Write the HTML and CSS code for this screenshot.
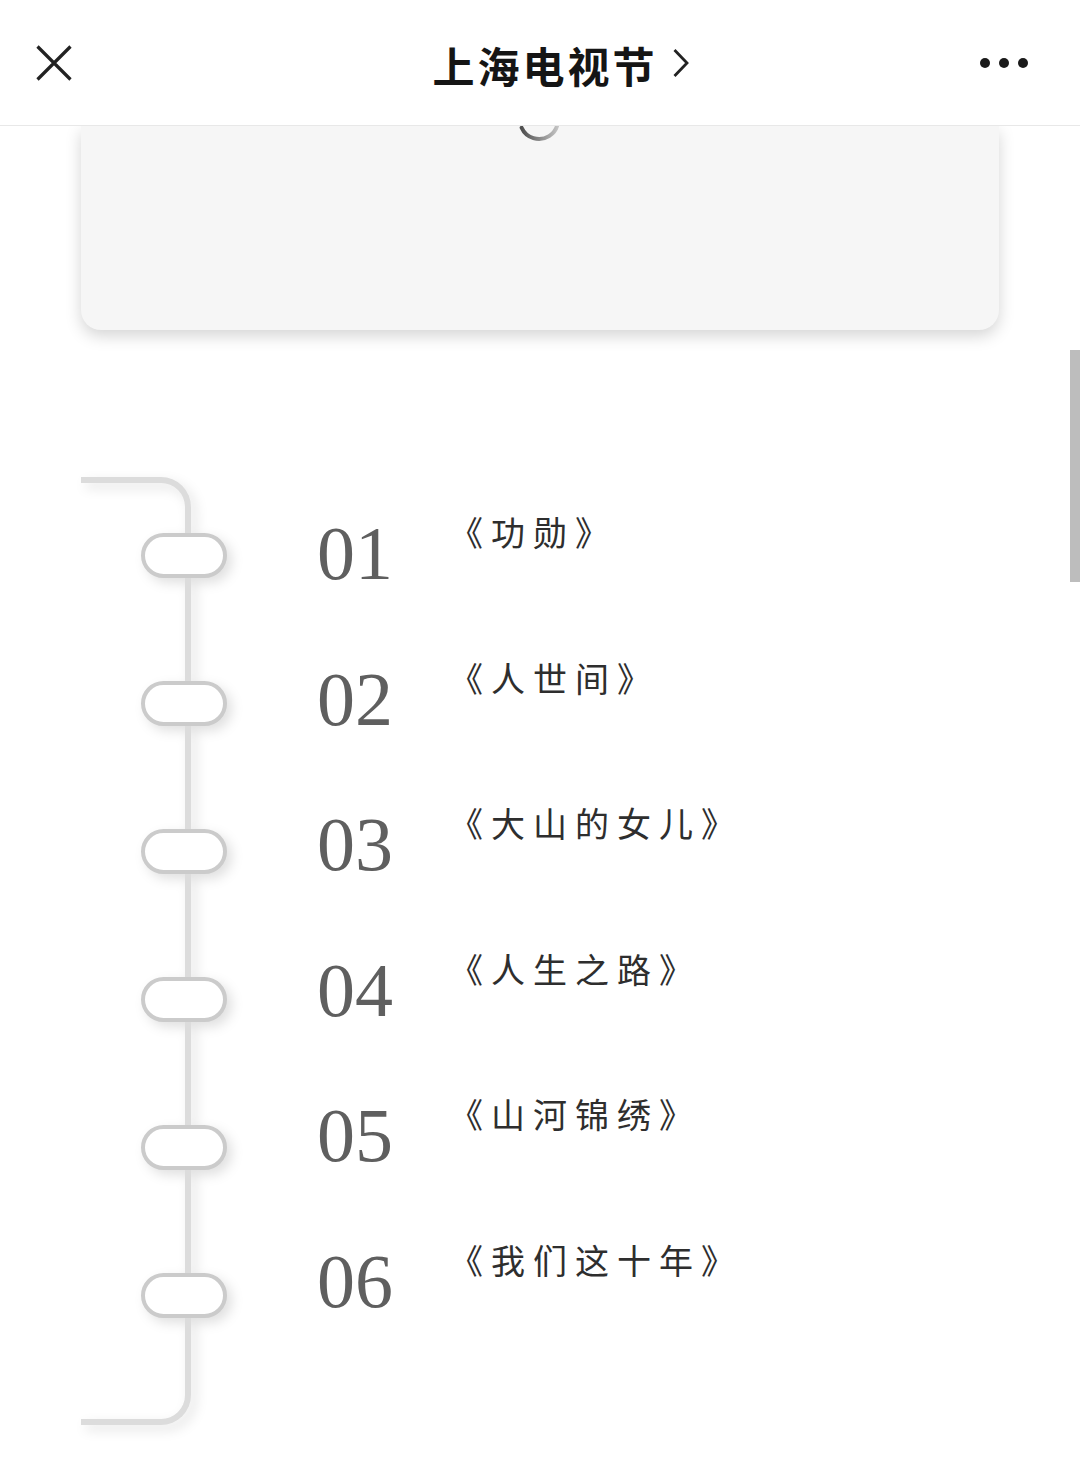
FILE: index.html
```html
<!DOCTYPE html>
<html lang="zh-CN">
<head>
<meta charset="utf-8">
<title>上海电视节</title>
<link rel="stylesheet" href="styles.css">
</head>
<body>
<header class="topbar">
  <div class="topbar-left">
    <svg class="icon-close" viewBox="0 0 36 36" width="36" height="36" aria-hidden="true">
      <path d="M1.5 1.5 L34.5 34.5 M34.5 1.5 L1.5 34.5" stroke="#222" stroke-width="3.2" stroke-linecap="butt" fill="none"/>
    </svg>
  </div>
  <div class="topbar-title">
    <span class="title-text">上海电视节</span>
    <svg class="icon-chevron" viewBox="0 0 18 30" width="18" height="30" aria-hidden="true">
      <path d="M2.5 2 L15 15 L2.5 28" stroke="#222" stroke-width="2.8" fill="none"/>
    </svg>
  </div>
  <div class="topbar-right">
    <span class="dot"></span><span class="dot"></span><span class="dot"></span>
  </div>
</header>

<section class="card">
  <svg class="spinner" viewBox="0 0 44 44" width="44" height="44" aria-hidden="true">
    <defs>
      <linearGradient id="spin-grad" x1="1" y1="0" x2="0" y2="0">
        <stop offset="0" stop-color="#c4c4c4"/>
        <stop offset="1" stop-color="#4f4f4f"/>
      </linearGradient>
    </defs>
    <path d="M36.55 9.79 A19 19 0 1 1 4.64 29.73" stroke="url(#spin-grad)" stroke-width="4" stroke-linecap="round" fill="none"/>
  </svg>
</section>

<section class="timeline">
  <div class="binder">
    <span class="ring"></span>
    <span class="ring"></span>
    <span class="ring"></span>
    <span class="ring"></span>
    <span class="ring"></span>
    <span class="ring"></span>
  </div>
  <ol class="entries">
    <li class="entry"><span class="num">01</span><span class="name">《功勋》</span></li>
    <li class="entry"><span class="num">02</span><span class="name">《人世间》</span></li>
    <li class="entry"><span class="num">03</span><span class="name">《大山的女儿》</span></li>
    <li class="entry"><span class="num">04</span><span class="name">《人生之路》</span></li>
    <li class="entry"><span class="num">05</span><span class="name">《山河锦绣》</span></li>
    <li class="entry"><span class="num">06</span><span class="name">《我们这十年》</span></li>
  </ol>
</section>

<div class="scroll-thumb"></div>
</body>
</html>
```

FILE: styles.css
```css
html, body {
  margin: 0;
  padding: 0;
  background: #ffffff;
}

body {
  width: 1080px;
  height: 1475px;
  overflow: hidden;
  position: relative;
  font-family: "Noto Sans CJK SC", "Noto Sans", sans-serif;
  color: #333;
}

/* ---------- top navigation bar ---------- */
.topbar {
  position: relative;
  z-index: 2;
  height: 125px;
  background: #ffffff;
  border-bottom: 1px solid #e8e8e8;
  display: grid;
  grid-template-columns: 200px 1fr 200px;
  align-items: center;
}

.topbar-left {
  padding-left: 36px;
  display: flex;
  align-items: center;
}

.icon-close {
  display: block;
}

.topbar-title {
  display: flex;
  align-items: center;
  justify-content: center;
  gap: 14px;
  padding-left: 42px;
}

.title-text {
  font-size: 42px;
  font-weight: 700;
  letter-spacing: 3px;
  color: #151515;
  line-height: 1;
  padding-top: 4px;
}

.icon-chevron {
  display: block;
}

.topbar-right {
  display: flex;
  justify-content: flex-end;
  align-items: center;
  gap: 9px;
  padding-right: 52px;
}

.dot {
  width: 10px;
  height: 10px;
  border-radius: 50%;
  background: #1a1a1a;
}

/* ---------- loading card ---------- */
.card {
  position: relative;
  z-index: 1;
  margin: 0 81px;
  height: 204px;
  background: #f6f6f6;
  border-radius: 0 0 20px 20px;
  box-shadow: 0 6px 16px rgba(0, 0, 0, 0.17);
  overflow: hidden;
  display: flex;
  justify-content: center;
}

.spinner {
  display: block;
  margin-top: -28px;
  margin-left: -2px;
}

/* ---------- binder timeline ---------- */
.timeline {
  display: flex;
  margin: 147px 0 0 81px;
}

.binder {
  box-sizing: border-box;
  width: 110px;
  height: 948px;
  border: 6px solid #dcdcdc;
  border-left: none;
  border-radius: 0 30px 30px 0;
  filter: drop-shadow(5px 5px 6px rgba(0, 0, 0, 0.12));
  display: flex;
  flex-direction: column;
  align-items: flex-start;
  gap: 103px;
  padding: 50px 0 0 60px;
}

.ring {
  display: block;
  flex: none;
  box-sizing: border-box;
  width: 86px;
  height: 45px;
  border: 4px solid #cbcbcb;
  border-radius: 23px;
  background: #ffffff;
}

.entries {
  list-style: none;
  margin: 0 0 0 126px;
  padding: 38px 0 0 0;
}

.entry {
  display: flex;
  align-items: flex-start;
  height: 145.5px;
}

.num {
  width: 132px;
  flex: none;
  font-family: "Liberation Serif", "Times New Roman", serif;
  font-size: 76px;
  line-height: 1;
  color: #5f5f5f;
}

.name {
  font-size: 34px;
  line-height: 1;
  letter-spacing: 8px;
  color: #2e2e2e;
}

/* ---------- overlay scroll indicator ---------- */
.scroll-thumb {
  position: absolute;
  top: 350px;
  right: 0;
  width: 10px;
  height: 232px;
  background: #bdbdbd;
}
```
